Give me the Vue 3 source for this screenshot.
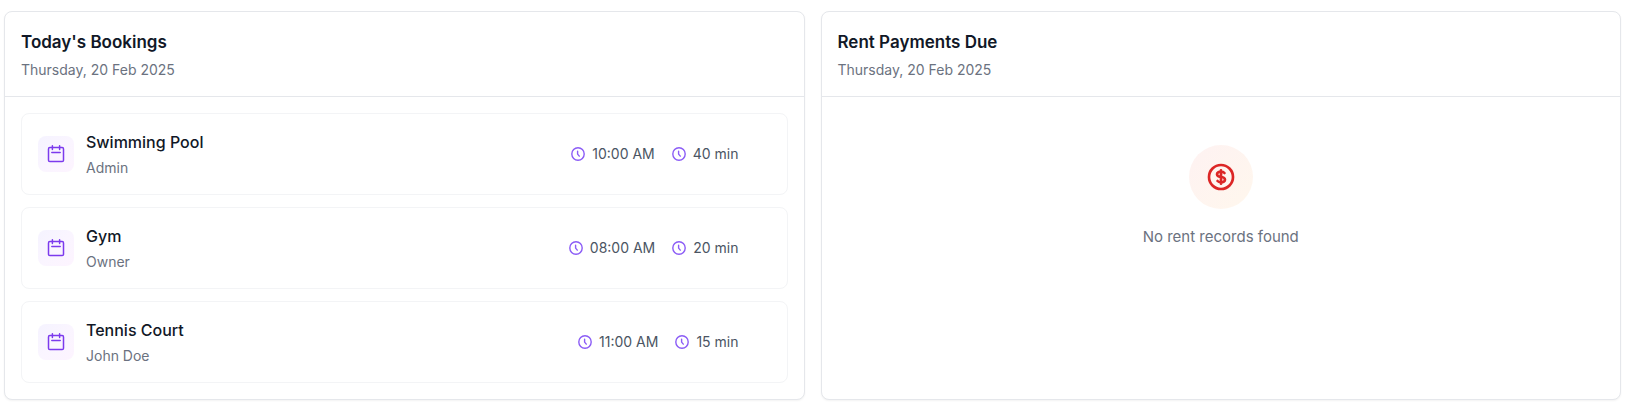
<script setup>
const date = 'Thursday, 20 Feb 2025'
const bookings = [
  { place: 'Swimming Pool', by: 'Admin', time: '10:00 AM', length: '40 min' },
  { place: 'Gym', by: 'Owner', time: '08:00 AM', length: '20 min' },
  { place: 'Tennis Court', by: 'John Doe', time: '11:00 AM', length: '15 min' },
]
</script>

<template>
  <main class="board">
    <section class="card">
      <header class="card-head">
        <h2>Today's Bookings</h2>
        <p>{{ date }}</p>
      </header>
      <ul class="list">
        <li v-for="b in bookings" :key="b.place" class="item">
          <span class="badge">
            <svg viewBox="0 0 20 20" width="20" height="20" aria-hidden="true">
              <rect x="2.5" y="3.6" width="15" height="13.9" rx="1.3" />
              <path d="M6.4 1.8v3.8M13.6 1.8v3.8M5.8 8.5h8.4" />
            </svg>
          </span>
          <div class="who">
            <h3>{{ b.place }}</h3>
            <p>{{ b.by }}</p>
          </div>
          <div class="times">
            <span v-for="t in [b.time, b.length]" :key="t" class="time">
              <svg viewBox="0 0 16 16" width="16" height="16" aria-hidden="true">
                <circle cx="8" cy="8" r="6.2" />
                <path d="M7.6 5.2v2.9l1.7 2" />
              </svg>
              {{ t }}
            </span>
          </div>
        </li>
      </ul>
    </section>

    <section class="card">
      <header class="card-head">
        <h2>Rent Payments Due</h2>
        <p>{{ date }}</p>
      </header>
      <div class="empty">
        <span class="coin">
          <svg viewBox="0 0 24 24" width="32" height="32" aria-hidden="true">
            <path d="M12 8c-1.657 0-3 .895-3 2s1.343 2 3 2 3 .895 3 2-1.343 2-3 2m0-8c1.11 0 2.08.402 2.599 1M12 8V7m0 1v8m0 0v1m0-1c-1.11 0-2.08-.402-2.599-1M21 12a9 9 0 11-18 0 9 9 0 0118 0z" />
          </svg>
        </span>
        <p>No rent records found</p>
      </div>
    </section>
  </main>
</template>

<style>
body {
  background: #fff;
}
</style>

<style scoped>
.board {
  display: grid;
  grid-template-columns: 1fr 1fr;
  gap: 16px;
  padding: 11px 13px 11px 4px;
  font-family: Inter, "Liberation Sans", sans-serif;
  color: #111827;
}
h2,
h3,
p,
ul {
  margin: 0;
  padding: 0;
}
.card {
  border: 1px solid #e5e7eb;
  border-radius: 8px;
  background: #fff;
  box-shadow: 0 1px 2px rgba(0, 0, 0, 0.05);
}
.card-head {
  padding: 16px;
  border-bottom: 1px solid #e5e7eb;
}
h2 {
  font-size: 17px;
  line-height: 28px;
  font-weight: 600;
}
.card-head p,
.who p {
  margin-top: 4px;
  font-size: 14px;
  line-height: 20px;
  color: #6b7280;
}
.list {
  display: flex;
  flex-direction: column;
  gap: 12px;
  padding: 16px;
  list-style: none;
}
.item {
  display: flex;
  align-items: center;
  gap: 12px;
  padding: 16px 48px 16px 16px;
  border: 1px solid #f3f4f6;
  border-radius: 8px;
}
.badge {
  display: flex;
  padding: 8px;
  border-radius: 8px;
  background: linear-gradient(135deg, #f5f3ff, #faf5ff 50%, #fdf4ff);
}
svg {
  display: block;
  fill: none;
  stroke: currentColor;
  stroke-linecap: round;
  stroke-linejoin: round;
}
.badge svg {
  color: #7c3aed;
  stroke-width: 1.5;
}
.who {
  flex: 1;
}
h3 {
  font-size: 16px;
  line-height: 24px;
  font-weight: 500;
}
.times {
  display: flex;
  gap: 16px;
}
.time {
  display: flex;
  align-items: center;
  gap: 6px;
  font-size: 14px;
  line-height: 20px;
  color: #4b5563;
}
.time svg {
  color: #8b5cf6;
  stroke-width: 1.4;
}
.empty {
  display: flex;
  flex-direction: column;
  align-items: center;
  gap: 16px;
  padding: 48px 16px;
  font-size: 15px;
  line-height: 24px;
  color: #6b7280;
}
.coin {
  padding: 16px;
  border-radius: 50%;
  background: linear-gradient(135deg, #fef2f2, #fff7ed);
  color: #dc2626;
}
.coin svg {
  stroke-width: 2;
}
</style>
